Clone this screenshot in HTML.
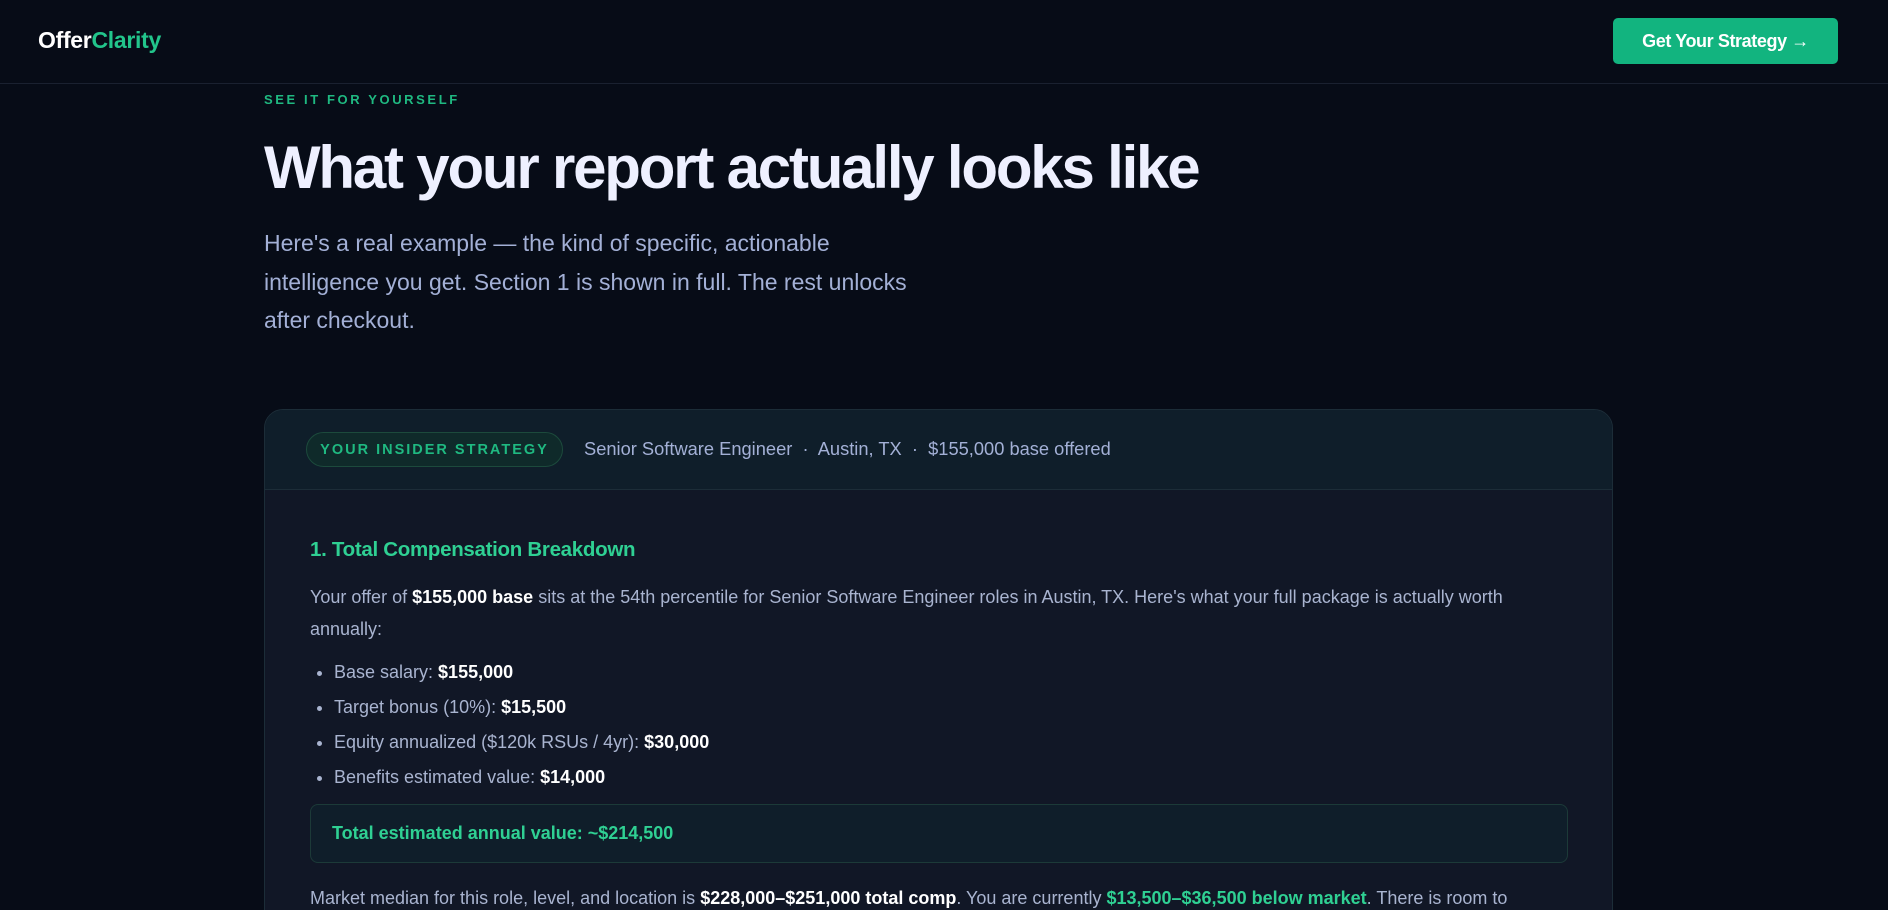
<!DOCTYPE html>
<html><head><meta charset="utf-8"><style>
*{margin:0;padding:0;box-sizing:border-box}
html{width:1888px;height:910px;overflow:hidden}
body{width:1888px;height:910px;overflow:hidden;background:#070c17;font-family:"Liberation Sans",sans-serif;color:#a9b4d0;position:relative}
.hdr{position:absolute;left:0;top:0;width:1888px;height:84px;border-bottom:1px solid #1a2130}
.logo{position:absolute;left:38px;top:27px;font-size:23px;font-weight:bold;color:#fff;letter-spacing:-0.3px}
.logo span{color:#22c58b}
.btn{position:absolute;left:1613px;top:18px;width:225px;height:46px;background:#12b47f;border-radius:5px;color:#fff;font-weight:bold;font-size:18px;line-height:46px;text-align:center;letter-spacing:-0.4px}
.eyebrow{position:absolute;left:264px;top:92px;font-size:13px;font-weight:bold;color:#1fb981;letter-spacing:2.6px}
h1{position:absolute;left:264px;top:133px;font-size:60px;font-weight:bold;color:#eef0ff;letter-spacing:-2.2px;white-space:nowrap}
.lead{position:absolute;left:264px;top:224px;width:680px;font-size:23px;line-height:38.5px;color:#a3b0d6}
.card{position:absolute;left:264px;top:409px;width:1349px;height:520px;border:1px solid #1c2d38;border-radius:19px;background:#111726;overflow:hidden}
.ch{height:80px;background:#0f1e2a;border-bottom:1px solid #1c2d38;position:relative}
.pill{position:absolute;left:41px;top:22px;width:257px;height:35px;border:1px solid #1c4a3c;background:#0f2a2a;border-radius:18px;color:#1fb981;font-size:14.5px;font-weight:bold;letter-spacing:2px;line-height:35px;text-align:center}
.meta{position:absolute;left:319px;top:28px;font-size:18.3px;color:#a3b0d6}
.body{position:relative}
h2{position:absolute;left:45px;top:48px;font-size:20.5px;color:#2fd093;letter-spacing:-0.3px}
.p1{position:absolute;left:45px;top:92px;width:1260px;font-size:18px;line-height:31.5px}
b{color:#fff}
ul{position:absolute;left:69px;top:165px;font-size:18px;line-height:35px;list-style:disc}
.tot{position:absolute;left:45px;top:314px;width:1258px;height:59px;border:1px solid #1c3a38;background:#0f1e2a;border-radius:8px;color:#2fd093;font-weight:bold;font-size:18px;line-height:57px;padding-left:21px}
.p2{position:absolute;left:45px;top:393px;width:1280px;font-size:18px;line-height:31.5px;white-space:nowrap}
.g{color:#2fd093;font-weight:bold}
</style></head><body>
<div class="hdr"><div class="logo">Offer<span>Clarity</span></div><div class="btn">Get Your Strategy →</div></div>
<div class="eyebrow">SEE IT FOR YOURSELF</div>
<h1>What your report actually looks like</h1>
<div class="lead">Here's a real example — the kind of specific, actionable intelligence you get. Section 1 is shown in full. The rest unlocks after checkout.</div>
<div class="card">
<div class="ch"><div class="pill">YOUR INSIDER STRATEGY</div><div class="meta">Senior Software Engineer &nbsp;·&nbsp; Austin, TX &nbsp;·&nbsp; $155,000 base offered</div></div>
<div class="body">
<h2>1. Total Compensation Breakdown</h2>
<div class="p1">Your offer of <b>$155,000 base</b> sits at the 54th percentile for Senior Software Engineer roles in Austin, TX. Here's what your full package is actually worth annually:</div>
<ul><li>Base salary: <b>$155,000</b></li><li>Target bonus (10%): <b>$15,500</b></li><li>Equity annualized ($120k RSUs / 4yr): <b>$30,000</b></li><li>Benefits estimated value: <b>$14,000</b></li></ul>
<div class="tot">Total estimated annual value: ~$214,500</div>
<div class="p2">Market median for this role, level, and location is <b>$228,000–$251,000 total comp</b>. You are currently <span class="g">$13,500–$36,500 below market</span>. There is room to</div>
</div></div>
</body></html>
